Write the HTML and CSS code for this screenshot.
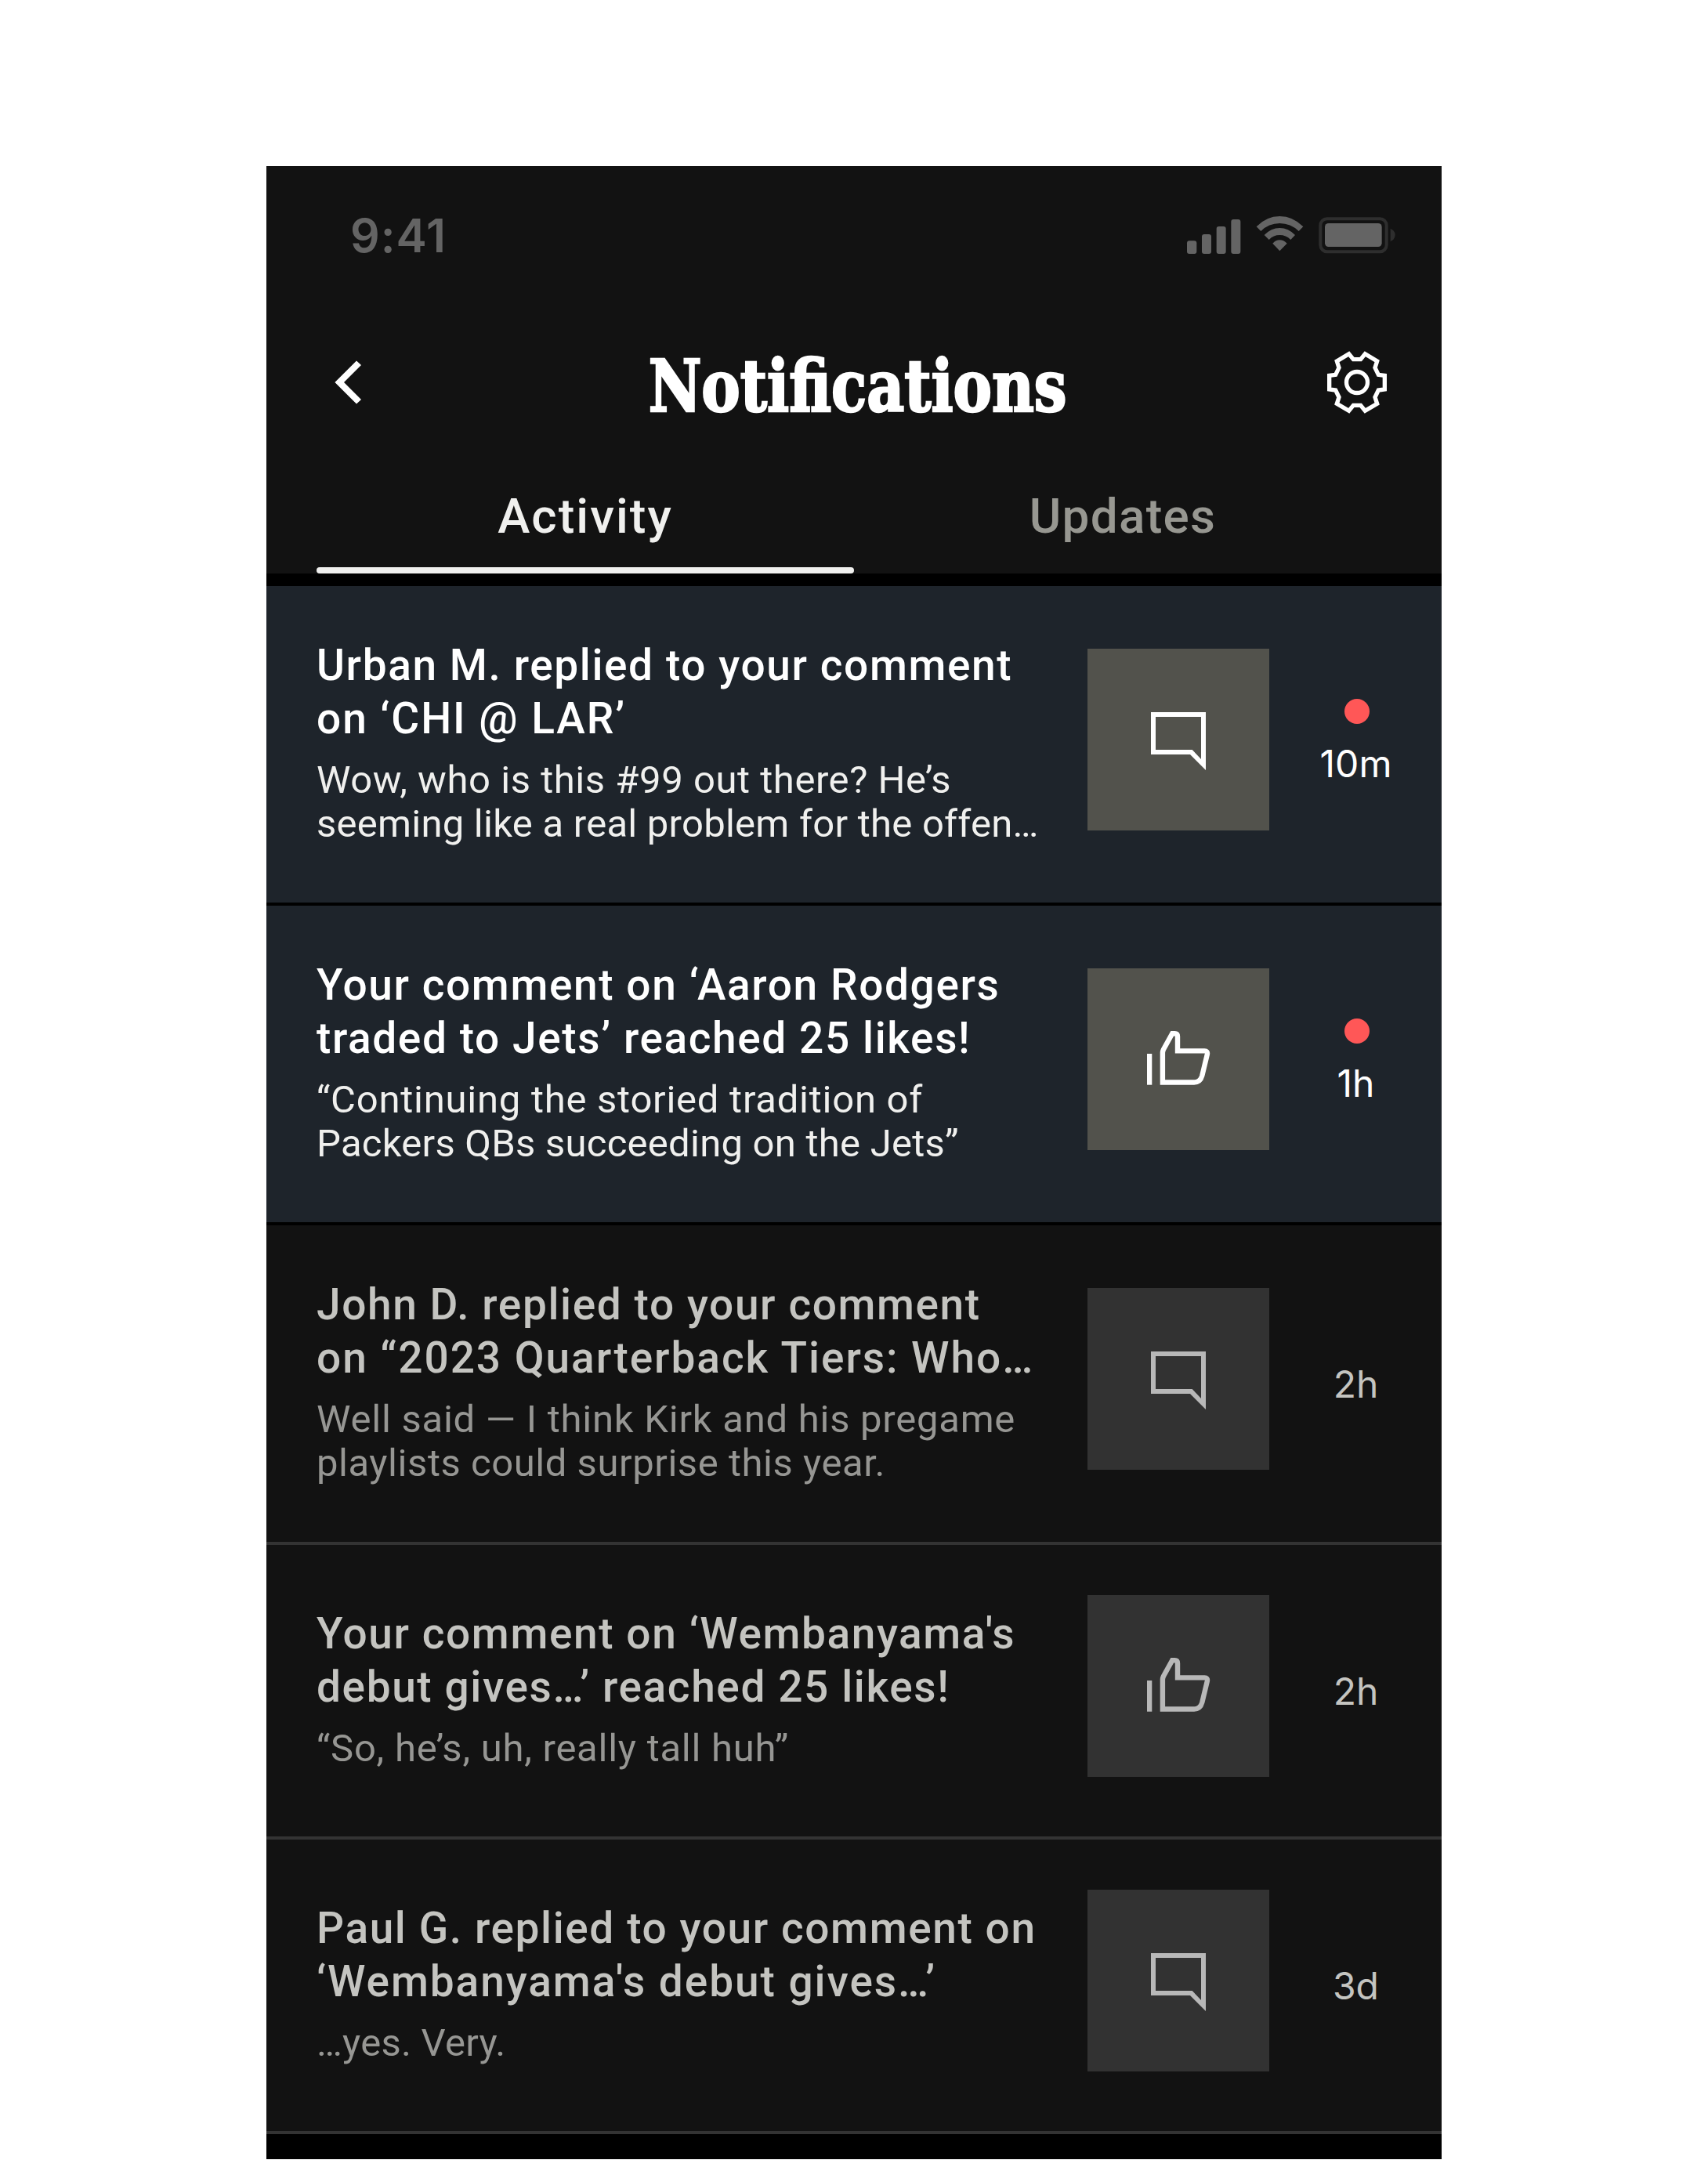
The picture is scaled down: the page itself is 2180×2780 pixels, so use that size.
FILE: index.html
```
<!DOCTYPE html>
<html lang="en">
<head>
<meta charset="utf-8">
<title>Notifications</title>
<link rel="stylesheet" href="styles.css">
</head>
<body>
<svg class="sprite" aria-hidden="true">
  <symbol id="comment" viewBox="0 0 96 96">
    <path fill="currentColor" fill-rule="evenodd" d="M13 13H83V87L63 67H13ZM19 19V61H65.7L77 73V19Z"/>
  </symbol>
  <symbol id="like" viewBox="0 0 96 96">
    <path fill="currentColor" d="M8 41h6.3v39.7H8z"/>
    <path fill="none" stroke="currentColor" stroke-width="6.4" d="M27.9 77.5V39.5Q28 37.5 29 35.5L40.2 15.2H43.5Q47 15.2 47 19V37.4H81.5Q85.6 37.4 84.9 41.5L78.3 69Q76 77.5 68 77.5Z"/>
  </symbol>
</svg>
<main class="phone">
  <header class="header">
    <div class="status">
      <span class="clock">9:41</span>
      <svg class="indicators" viewBox="70 45 805 150">
        <g fill="#646464">
          <rect x="73" y="142" width="37" height="50" rx="9"/>
          <rect x="130" y="117" width="36" height="75" rx="9"/>
          <rect x="186" y="87" width="36" height="105" rx="9"/>
          <rect x="242" y="60" width="36" height="132" rx="9"/>
          <path d="M339 88Q377 48 428 48T518 88L501 105Q470 75 428 75T356 105Z"/>
          <path d="M369 120Q395 93 428 93T487 120L470 138Q452 120 428 120T387 138Z"/>
          <path d="M401 152Q413 139 428 139T456 152L428 181Z"/>
          <rect x="601" y="75" width="218" height="90" rx="14"/>
        </g>
        <rect x="584" y="57.500" width="253" height="126" rx="25" fill="none" stroke="#2e2e2e" stroke-width="12"/>
        <path d="M852 95Q870 103 870 120T852 145Z" fill="#2e2e2e"/>
      </svg>
    </div>
    <div class="nav">
      <svg class="back" viewBox="0 0 34 56"><path fill="#fff" d="M.4 28L28 .4L34 6L12 28L34 50L28 55.600Z"/></svg>
      <h1 class="heading">Notifications</h1>
      <svg class="settings" viewBox="36 48 240 252" fill="none" stroke="#fff" stroke-width="16">
        <path d="M142 86H170L187 65L233 93L225 118L238 145L262 148V201L238 204L225 231L233 256L187 283L170 262H142L125 283L79 256L87 231L74 204L50 201V148L74 145L87 118L79 93L125 65Z"/>
        <circle cx="156" cy="174" r="40.500"/>
      </svg>
    </div>
    <nav class="tabs">
      <a class="tab tab-active">Activity</a>
      <a class="tab">Updates</a>
    </nav>
  </header>
  <section class="list">
    <article class="row unread">
      <div class="text">
        <h2 class="title">Urban M. replied to your comment<br><span class="loose">on ‘CHI @ LAR’</span></h2>
        <p class="body">Wow, who is this #99 out there? He’s<br><span class="snug">seeming like a real problem for the offen…</span></p>
      </div>
      <div class="thumb"><svg class="icon"><use href="#comment"/></svg></div>
      <div class="meta"><i class="dot"></i><span class="time">10m</span></div>
    </article>
    <article class="row unread">
      <div class="text">
        <h2 class="title">Your comment on ‘Aaron Rodgers<br>traded to Jets’ reached 25 likes!</h2>
        <p class="body"><span class="wide">“Continuing the storied tradition of</span><br><span class="snug">Packers QBs succeeding on the Jets”</span></p>
      </div>
      <div class="thumb"><svg class="icon"><use href="#like"/></svg></div>
      <div class="meta"><i class="dot"></i><span class="time">1h</span></div>
    </article>
    <article class="row">
      <div class="text">
        <h2 class="title">John D. replied to your comment<br><span class="loose">on “2023 Quarterback Tiers: Who…</span></h2>
        <p class="body"><span class="wide">Well said — I think Kirk and his pregame</span><br>playlists could surprise this year.</p>
      </div>
      <div class="thumb"><svg class="icon"><use href="#comment"/></svg></div>
      <div class="meta"><span class="time">2h</span></div>
    </article>
    <article class="row">
      <div class="text">
        <h2 class="title">Your comment on ‘Wembanyama's<br>debut gives…’ reached 25 likes!</h2>
        <p class="body"><span class="wide">“So, he’s, uh, really tall huh”</span></p>
      </div>
      <div class="thumb"><svg class="icon"><use href="#like"/></svg></div>
      <div class="meta"><span class="time">2h</span></div>
    </article>
    <article class="row">
      <div class="text">
        <h2 class="title">Paul G. replied to your comment on<br><span class="loose">‘Wembanyama's debut gives…’</span></h2>
        <p class="body"><span class="snug">…yes. Very.</span></p>
      </div>
      <div class="thumb"><svg class="icon"><use href="#comment"/></svg></div>
      <div class="meta"><span class="time">3d</span></div>
    </article>
  </section>
</main>
</body>
</html>
```
FILE: styles.css
```
* { box-sizing: border-box; margin: 0; padding: 0; }

body {
  width: 2180px;
  height: 2780px;
  padding: 212px 340px 0;
  overflow: hidden;
  background: #fff;
  font-family: Roboto, "Liberation Sans", sans-serif;
}

svg { display: block; }
.sprite { display: none; }

.phone {
  width: 1500px;
  height: 2544px;
  background: #000;
}

.header {
  height: 520px;
  background: #121212;
}

.status {
  display: flex;
  align-items: center;
  justify-content: space-between;
  height: 176px;
  padding: 0 58px 0 107px;
}
.clock {
  padding-top: 2px;
  font: 600 59px/72px Inter, sans-serif;
  letter-spacing: 1px;
  color: #646464;
}
.indicators { width: 268.33px; height: 50px; }

.nav {
  display: grid;
  grid-template-columns: 1fr auto 1fr;
  align-items: center;
  height: 200px;
  padding: 0 68px;
}
.back { width: 34px; height: 56px; margin-left: 19px; }
.settings { width: 80px; height: 84px; justify-self: end; }
.heading {
  padding-top: 10px;
  font: bold 91.5px/100px "DejaVu Serif Condensed", "DejaVu Serif", serif;
  color: #fff;
  -webkit-text-stroke: 2.5px #fff;
  transform: translateX(5px) scaleX(.9);
}

.tabs {
  display: flex;
  height: 144px;
  padding: 0 64px;
}
.tab {
  display: flex;
  flex: 1;
  flex-direction: column;
  align-items: center;
  justify-content: space-between;
  padding-top: 35px;
  font-size: 62px;
  font-weight: 500;
  line-height: 72px;
  letter-spacing: 1.3px;
  color: #979791;
}
.tab-active { color: #f0f0ee; letter-spacing: 2px; }
.tab-active::after {
  content: "";
  align-self: stretch;
  height: 8px;
  border-radius: 4px;
  background: #f0f0ee;
}

.list { padding-top: 16px; }

.row {
  display: flex;
  align-items: center;
  padding: 64px 64px 76px;
  border-bottom: 4px solid #333;
  background: #121212;
  color: #c4c4c0;
}
.row.unread {
  border-color: #000;
  background: #1e242b;
  color: #fff;
}

.text {
  flex: 1;
  margin-bottom: -4px;
  padding-top: 3px;
  white-space: nowrap;
}
.title {
  font-size: 55px;
  font-weight: 500;
  line-height: 68px;
  letter-spacing: 1.6px;
}
.body {
  margin-top: 17px;
  font-size: 49px;
  line-height: 56px;
  letter-spacing: .55px;
  color: #969693;
}
.unread .body { color: #f0f0ee; }

/* Tracking adjustments for individual lines */
.loose { letter-spacing: 1.95px; }
.wide { letter-spacing: .75px; }
.snug { letter-spacing: .25px; }

.thumb {
  display: grid;
  place-items: center;
  width: 232px;
  height: 232px;
  background: #323232;
  color: #b8b8b8;
}
.unread .thumb { background: #52524c; color: #fff; }
.icon { width: 96px; height: 96px; }

.meta {
  display: flex;
  flex-direction: column;
  align-items: center;
  gap: 16px;
  width: 88px;
  margin-left: 68px;
}
.dot {
  width: 32px;
  height: 32px;
  border-radius: 50%;
  background: #ff5757;
}
.time {
  margin: 0 0 -6.5px -3px;
  padding-top: 6.5px;
  font: 400 48px/56px Inter, sans-serif;
}
```
